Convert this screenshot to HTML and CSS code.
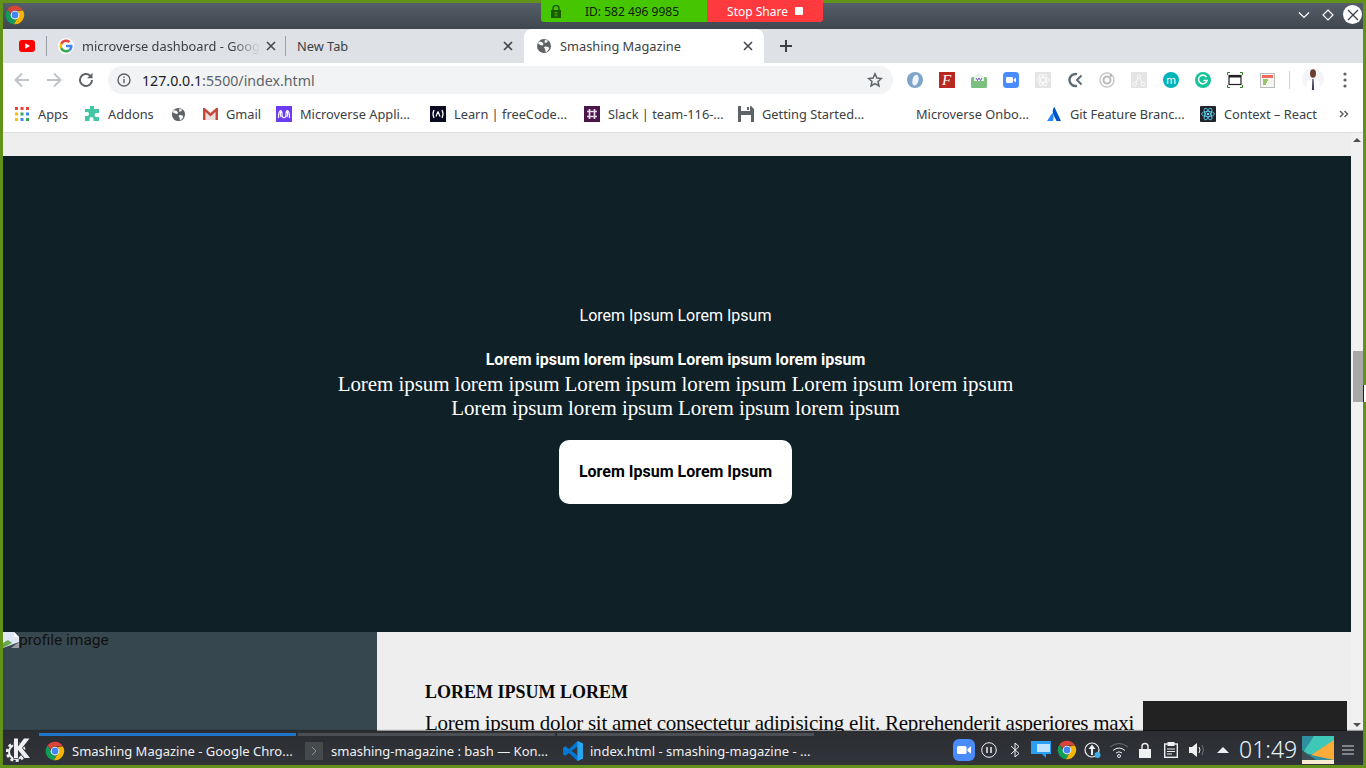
FILE: index.html
```html
<!DOCTYPE html>
<html lang="en">
<head>
<meta charset="utf-8">
<title>Smashing Magazine</title>
<link rel="stylesheet" href="styles.css">
</head>
<body>
<svg class="defs" width="0" height="0" aria-hidden="true">
  <symbol id="chrome" viewBox="0 0 48 48">
    <path fill="#db4437" d="M24 2a22 22 0 0 1 19 11H24a11 11 0 0 0-10.500 7.500L6.200 10.600A22 22 0 0 1 24 2z"/>
    <path fill="#0f9d58" d="M6.200 10.600l10 17.400A9.500 9.500 0 0 0 29 33.500L21.500 45.900A22 22 0 0 1 6.200 10.600z"/>
    <path fill="#f4b400" d="M43 13a22 22 0 0 1-21.500 32.900L31.500 28.500A9.500 9.500 0 0 0 30 15z"/>
    <circle cx="24" cy="24" r="10.500" fill="#fff"/>
    <circle cx="24" cy="24" r="8.200" fill="#4285f4"/>
  </symbol>
  <symbol id="globe" viewBox="0 0 16 16">
    <circle cx="8" cy="8" r="7" fill="#5f6368"/>
    <path fill="#fff" d="M3 3.500l3 .5 1.500 2-1 1.500-2-.5L2 5.500zM9 1.800l3 1-1.500 2H8.500zM9 8.500l3.500.5.500 2-2.500 3-1-.5-.5-2.500-1-1.500z"/>
  </symbol>
</svg>

<div class="screen">
  <header class="titlebar">
    <svg class="title-logo" width="20" height="20"><use href="#chrome"/></svg>
    <div class="window-buttons">
      <svg width="14" height="14" viewBox="0 0 14 14"><path d="M2 4.500l5 5 5-5" fill="none" stroke="#fff" stroke-width="1.200"/></svg>
      <svg width="14" height="14" viewBox="0 0 14 14"><path d="M7 2l5 5-5 5-5-5z" fill="none" stroke="#fff" stroke-width="1.200"/></svg>
      <span class="close-btn"><svg width="18" height="18" viewBox="0 0 18 18"><path d="M4 4l10 10M14 4L4 14" stroke="#3b4149" stroke-width="1.300"/></svg></span>
    </div>
  </header>

  <div class="share-bar">
    <div class="share-id">
      <svg class="share-lock" width="10" height="13" viewBox="0 0 10 13"><path d="M2 6V3.500a3 3 0 0 1 6 0V6" fill="none" stroke="#1a5a00" stroke-width="1.500"/><rect x="0" y="5" width="10" height="8" fill="#1a5a00"/><path d="M3.500 7h3v.8h-3zM3.500 8.700h3v.8h-3zM3.500 10.400h3v.8h-3z" fill="#46c600"/></svg>
      <span>ID: 582 496 9985</span>
    </div>
    <div class="share-stop"><span>Stop Share</span><i class="stop-square"></i></div>
  </div>

  <nav class="tabstrip">
    <div class="tab tab-pin">
      <svg width="16" height="12" viewBox="0 0 16 12"><rect width="16" height="12" rx="3" fill="#f00"/><path d="M6.300 3.200L11 6l-4.700 2.800z" fill="#fff"/></svg>
    </div>
    <div class="tab tab-google">
      <span class="g-badge"><svg width="14" height="14" viewBox="0 0 48 48"><path fill="#ea4335" d="M24 10c3.500 0 6.500 1.300 8.900 3.400l6.300-6.300C35.300 3.600 30 1.500 24 1.500 15.200 1.500 7.700 6.500 4 13.800l7.300 5.700C13.100 14 18.100 10 24 10z"/><path fill="#4285f4" d="M46.500 24.500c0-1.600-.1-3.100-.4-4.500H24v8.500h12.700c-.6 2.900-2.200 5.300-4.700 7l7.200 5.600c4.200-3.900 7.300-9.700 7.300-16.600z"/><path fill="#fbbc05" d="M11.300 28.500a14 14 0 0 1 0-9L4 13.800a22.500 22.500 0 0 0 0 20.400z"/><path fill="#34a853" d="M24 46.500c6 0 11.100-2 14.800-5.400L31.600 35.500c-2 1.400-4.600 2.500-7.600 2.500-5.900 0-10.900-4-12.700-9.500L4 34.200c3.700 7.300 11.200 12.300 20 12.300z"/></svg></span>
      <span class="tab-title tab-fade">microverse dashboard - Google</span>
      <svg class="tab-x" width="10" height="10" viewBox="0 0 10 10"><path d="M1 1l8 8M9 1L1 9" stroke="#45494d" stroke-width="1.600"/></svg>
    </div>
    <div class="tab tab-new">
      <span class="tab-title">New Tab</span>
      <svg class="tab-x" width="10" height="10" viewBox="0 0 10 10"><path d="M1 1l8 8M9 1L1 9" stroke="#45494d" stroke-width="1.600"/></svg>
    </div>
    <div class="tab tab-active">
      <svg width="16" height="16"><use href="#globe"/></svg>
      <span class="tab-title">Smashing Magazine</span>
      <svg class="tab-x" width="10" height="10" viewBox="0 0 10 10"><path d="M1 1l8 8M9 1L1 9" stroke="#45494d" stroke-width="1.600"/></svg>
    </div>
    <svg class="new-tab" width="14" height="14" viewBox="0 0 14 14"><path d="M7 1v12M1 7h12" stroke="#3c4043" stroke-width="2"/></svg>
  </nav>

  <div class="toolbar">
    <svg class="nav-icon" width="18" height="18" viewBox="0 0 18 18"><path d="M16 9H3M9 2.500L2.500 9 9 15.500" fill="none" stroke="#c0c3c7" stroke-width="2"/></svg>
    <svg class="nav-icon" width="18" height="18" viewBox="0 0 18 18"><path d="M2 9h13M9 2.500L15.500 9 9 15.500" fill="none" stroke="#c0c3c7" stroke-width="2"/></svg>
    <svg class="nav-icon" width="18" height="18" viewBox="0 0 18 18"><path d="M15 9a6 6 0 1 1-1.800-4.300" fill="none" stroke="#5f6368" stroke-width="2"/><path d="M15.500 1.800v5.500H10z" fill="#5f6368"/></svg>
    <div class="omnibox">
      <svg width="14" height="14" viewBox="0 0 14 14"><circle cx="7" cy="7" r="6" fill="none" stroke="#5f6368" stroke-width="1.400"/><path d="M7 6v4.300M7 3.500v1.400" stroke="#5f6368" stroke-width="1.400"/></svg>
      <span class="url"><b>127.0.0.1</b>:5500/index.html</span>
      <svg class="star" width="16" height="16" viewBox="0 0 16 16"><path d="M8 1.800l1.900 4.200 4.500.5-3.400 3 1 4.500L8 11.700l-4 2.300 1-4.500-3.400-3 4.500-.5z" fill="none" stroke="#5f6368" stroke-width="1.500"/></svg>
    </div>
    <div class="extensions">
      <span class="ext"><svg width="16" height="16" viewBox="0 0 16 16"><circle cx="8" cy="8" r="8" fill="#7fa3c9"/><ellipse cx="8.500" cy="8" rx="3" ry="5.500" fill="#eef4fa" transform="rotate(15 8 8)"/></svg></span>
      <span class="ext"><svg width="16" height="16" viewBox="0 0 16 16"><rect width="16" height="16" fill="#b8281f"/><text class="ext-f" x="3" y="13">F</text></svg></span>
      <span class="ext"><svg width="16" height="16" viewBox="0 0 16 16"><rect y="5" width="16" height="11" rx="1.500" fill="#7cc07f"/><path d="M3 5l5-4 5 4v4H3z" fill="#e8f0ea"/><path d="M5 6l1.500 2.500L8 6l1.500 2.500L11 6" fill="none" stroke="#7b5cc9" stroke-width="1"/></svg></span>
      <span class="ext"><svg width="16" height="16" viewBox="0 0 16 16"><rect width="16" height="16" rx="3.500" fill="#4a8cff"/><rect x="3" y="5" width="7" height="6" rx="1.200" fill="#fff"/><path d="M10.800 7.300L13 5.500v5l-2.200-1.800z" fill="#fff"/></svg></span>
      <span class="ext"><svg width="16" height="16" viewBox="0 0 16 16"><rect width="16" height="16" fill="#e4e4e4"/><g fill="none" stroke="#fafafa"><ellipse cx="8" cy="8" rx="6" ry="2.400"/><ellipse cx="8" cy="8" rx="6" ry="2.400" transform="rotate(60 8 8)"/><ellipse cx="8" cy="8" rx="6" ry="2.400" transform="rotate(120 8 8)"/></g></svg></span>
      <span class="ext"><svg width="16" height="16" viewBox="0 0 16 16"><path d="M10 2.200A6 6 0 1 0 10 13.800" fill="none" stroke="#5c6c75" stroke-width="2.400"/><path d="M14.500 3.500L10 8l4.500 4.500" fill="none" stroke="#5c6c75" stroke-width="2"/></svg></span>
      <span class="ext"><svg width="16" height="16" viewBox="0 0 16 16"><circle cx="8" cy="8" r="7" fill="none" stroke="#c8c8c8" stroke-width="1.500"/><circle cx="8" cy="8" r="3.500" fill="none" stroke="#bbb" stroke-width="2"/><circle cx="12" cy="3.500" r="1.200" fill="#aaa"/></svg></span>
      <span class="ext"><svg width="16" height="16" viewBox="0 0 16 16"><rect width="16" height="16" fill="#e4e4e4"/><g fill="none" stroke="#fafafa"><circle cx="8" cy="4.500" r="1.800"/><circle cx="4" cy="12" r="1.800"/><circle cx="12" cy="12" r="1.800"/><path d="M7 6l-2.200 4.500M9 6l2.200 4.500"/></g></svg></span>
      <span class="ext"><svg width="16" height="16" viewBox="0 0 16 16"><circle cx="8" cy="8" r="8" fill="#00b4b8"/><text class="ext-m" x="8" y="11.500">m</text></svg></span>
      <span class="ext"><svg width="16" height="16" viewBox="0 0 16 16"><circle cx="8" cy="8" r="8" fill="#15c39a"/><path d="M11.500 5.200A4.300 4.300 0 1 0 12 8.500H8.500" fill="none" stroke="#fff" stroke-width="1.600"/></svg></span>
      <span class="ext"><svg width="16" height="16" viewBox="0 0 16 16"><path d="M.500 3V.500H3M13 .500h2.500V3M.500 13v2.500H3M13 15.500h2.500V13" fill="none" stroke="#2e7d32"/><rect x="2" y="3.500" width="12" height="9" fill="#fff" stroke="#222" stroke-width="1.200"/><rect x="2" y="3.500" width="12" height="2" fill="#222"/></svg></span>
      <span class="ext"><svg width="15" height="15" viewBox="0 0 15 15"><rect x=".5" y=".5" width="14" height="14" fill="#f6f6f0" stroke="#bbb"/><rect x="2" y="2" width="11" height="3" fill="#f06a5e"/><path d="M3 7h5M3 9h4M3 11h3" stroke="#7cb342" stroke-width="1.300"/></svg></span>
    </div>
    <span class="toolbar-sep"></span>
    <svg class="avatar" width="22" height="26" viewBox="0 0 22 26"><circle cx="11" cy="12" r="11" fill="#f3f5f8"/><ellipse cx="11" cy="6.500" rx="3" ry="4.200" fill="#6b4030"/><path d="M5 14c2-2 10-2 12 0l1 12H4z" fill="#fff"/><path d="M10.400 12h1.200l.5 11h-2.200z" fill="#39405a"/></svg>
    <svg class="menu-dots" width="4" height="16" viewBox="0 0 4 16"><circle cx="2" cy="2" r="1.600" fill="#5f6368"/><circle cx="2" cy="8" r="1.600" fill="#5f6368"/><circle cx="2" cy="14" r="1.600" fill="#5f6368"/></svg>
  </div>

  <div class="bookmarks">
    <a class="bm bm-apps"><svg width="14" height="14" viewBox="0 0 14 14"><path fill="#ea4335" d="M0 0h3v3H0zM5.500 0h3v3h-3zM11 0h3v3h-3z"/><path fill="#fbbc05" d="M0 5.500h3v3H0zM0 11h3v3H0z"/><path fill="#34a853" d="M5.500 5.500h3v3h-3zM11 11h3v3h-3z"/><path fill="#4285f4" d="M11 5.500h3v3h-3zM5.500 11h3v3h-3z"/></svg><span>Apps</span></a>
    <a class="bm"><svg width="16" height="16" viewBox="0 0 16 16"><path fill="#43c6a5" d="M6 0h4v3h5v4h-2.500a2 2 0 0 0 0 4H15v4H9.500v-2a2 2 0 0 0-4 0v2H1v-5h2a2 2 0 0 0 0-4H1V3h5z"/></svg><span>Addons</span></a>
    <a class="bm"><svg width="15" height="15"><use href="#globe"/></svg></a>
    <a class="bm"><svg width="15" height="12" viewBox="0 0 15 12"><path fill="#e8e0dc" d="M2.500 4l5 4.500 5-4.500v8h-10z"/><path fill="#c5483c" d="M0 0l1.800 0L7.500 5 13.200 0H15v12h-2.500V4L7.500 8.500 2.500 4v8H0z"/></svg><span>Gmail</span></a>
    <a class="bm"><svg width="16" height="16" viewBox="0 0 16 16"><rect width="16" height="16" fill="#6c3cf0"/><path d="M2.500 12C2.500 3 6 3 6 8c0 5 4 5 4 0s3.500-5 3.500 4M6 8c0-5-3-1-1 3M10 8c0-5 3-1 1 3" fill="none" stroke="#fff" stroke-width="1.200"/></svg><span>Microverse Appli...</span></a>
    <a class="bm"><svg width="16" height="16" viewBox="0 0 16 16"><rect width="16" height="16" fill="#0a0a23"/><path d="M4 4Q2 8 4 12M12 4q2 4 0 8M8 5.500L6 10.500M8 5.500l2 5" fill="none" stroke="#fff" stroke-width="1.200"/></svg><span>Learn | freeCode...</span></a>
    <a class="bm"><svg width="16" height="16" viewBox="0 0 16 16"><rect width="16" height="16" fill="#4a154b"/><path d="M5.500 3v10M10.500 3v10M3 5.500h10M3 10.500h10" stroke="#e5d8e6" stroke-width="1.700"/></svg><span>Slack | team-116-...</span></a>
    <a class="bm"><svg width="16" height="16" viewBox="0 0 16 16"><path d="M0 0h13l3 3v13H0z" fill="#5f6368"/><rect x="3" y="0" width="9" height="5" fill="#fff"/><rect x="9" y="1" width="2" height="3" fill="#5f6368"/><rect x="3" y="9" width="10" height="7" fill="#fff"/></svg><span>Getting Started...</span></a>
    <a class="bm"><span>Microverse Onbo...</span></a>
    <a class="bm bm-git"><svg width="14" height="14" viewBox="0 0 14 14"><path d="M5.500 6C3.800 8 1.500 12 0 14h6c.8-2.500 1-5.500-.500-8z" fill="#2684ff"/><path d="M7 0C5 3.500 5.500 6 7 9l2.500 5H14L7.500.2z" fill="#0052cc"/></svg><span>Git Feature Branc...</span></a>
    <a class="bm"><svg width="16" height="16" viewBox="0 0 16 16"><rect width="16" height="16" rx="1" fill="#20232a"/><g fill="none" stroke="#61dafb" stroke-width=".8"><ellipse cx="8" cy="8" rx="6.500" ry="2.600"/><ellipse cx="8" cy="8" rx="6.500" ry="2.600" transform="rotate(60 8 8)"/><ellipse cx="8" cy="8" rx="6.500" ry="2.600" transform="rotate(120 8 8)"/></g><circle cx="8" cy="8" r="1.300" fill="#61dafb"/></svg><span>Context – React</span></a>
    <svg class="bm-more" width="10" height="8" viewBox="0 0 10 8"><path d="M1 1l3 3-3 3M5.500 1l3 3-3 3" fill="none" stroke="#5f6368" stroke-width="1.500"/></svg>
  </div>

  <div class="viewport">
    <main class="page">
      <section class="hero">
        <p class="hero-eyebrow">Lorem Ipsum Lorem Ipsum</p>
        <p class="hero-strong">Lorem ipsum lorem ipsum Lorem ipsum lorem ipsum</p>
        <p class="hero-serif">Lorem ipsum lorem ipsum Lorem ipsum lorem ipsum Lorem ipsum lorem ipsum<br>Lorem ipsum lorem ipsum Lorem ipsum lorem ipsum</p>
        <a class="hero-btn">Lorem Ipsum Lorem Ipsum</a>
      </section>
      <section class="about">
        <div class="about-photo">
          <svg class="broken" width="16" height="16" viewBox="0 0 16 16"><path d="M0 0h11l5 5v5L0 16z" fill="#dfe6f5"/><path d="M0 11l5-3 4 3-9 5z" fill="#6aa84f"/><path d="M11 0l5 5h-5z" fill="#fff"/><path d="M8 16l8-6v6z" fill="#9aa0a6"/></svg><span>profile image</span>
        </div>
        <div class="about-copy">
          <h2>LOREM IPSUM LOREM</h2>
          <p>Lorem ipsum dolor sit amet consectetur adipisicing elit. Reprehenderit asperiores maxi</p>
        </div>
      </section>
    </main>
    <div class="scrollbar">
      <i class="arrow-up"></i>
      <i class="thumb"></i>
      <i class="arrow-down"></i>
    </div>
    <div class="dark-overlay"></div>
  </div>

  <footer class="taskbar">
    <svg class="kde" width="26" height="26" viewBox="0 0 26 26"><g fill="none" stroke="#eff0f1"><circle cx="11" cy="15" r="8.800" stroke-width="2.600" stroke-dasharray="3 2.500"/><circle cx="11" cy="15" r="7" stroke-width="2"/></g><path d="M9 1.500h4v8l6-8h5.500l-7.500 9.500 8 10h-5.500L13 13v8H9z" fill="#eff0f1" stroke="#2e3136" stroke-width="1.500" paint-order="stroke"/></svg>
    <div class="tasks">
      <div class="task task-on"><svg width="20" height="20"><use href="#chrome"/></svg><span>Smashing Magazine - Google Chro...</span></div>
      <div class="task"><svg class="term" width="18" height="18" viewBox="0 0 18 18"><rect width="18" height="18" fill="#454a4d"/><path d="M7 5l4 4-4 4" fill="none" stroke="#8d9396" stroke-width="1"/></svg><span>smashing-magazine : bash — Kon...</span></div>
      <div class="task"><svg width="20" height="20" viewBox="0 0 20 20"><path d="M14.500 0L20 2.500v15L14.500 20 6 12l-3.500 2.700L0 13.500v-7L2.500 5.300 6 8z" fill="#0078d4"/><path d="M14.500 5.500L8.500 10l6 4.500z" fill="#31363b"/><path d="M14.500 0L20 2.500v15L14.500 20z" fill="#2aa4ec"/></svg><span>index.html - smashing-magazine - ...</span></div>
    </div>
    <div class="tray">
      <span class="tray-icon tray-zoom"><svg width="22" height="22" viewBox="0 0 22 22"><rect width="22" height="22" rx="6" fill="#4a8cff"/><rect x="4" y="7" width="9.500" height="8" rx="1.500" fill="#fff"/><path d="M14.500 10l3.500-2.700v7.400L14.500 12z" fill="#fff"/></svg></span>
      <span class="tray-icon"><svg width="16" height="16" viewBox="0 0 16 16"><circle cx="8" cy="8" r="7.300" fill="none" stroke="#eff0f1"/><path d="M6 5v6M10 5v6" stroke="#eff0f1" stroke-width="1.500"/></svg></span>
      <span class="tray-icon"><svg width="12" height="16" viewBox="0 0 12 16"><path d="M2 4l8 7.500L6 15V1l4 3.500L2 12" fill="none" stroke="#eff0f1"/></svg></span>
      <span class="tray-icon"><svg width="20" height="20" viewBox="0 0 20 20"><path d="M0 1h20v13h-5v4l-4-4H0z" fill="#2a9df4"/><path d="M6 4h13v8H6z" fill="#bfe3fb"/></svg></span>
      <span class="tray-icon"><svg width="20" height="20"><use href="#chrome"/></svg></span>
      <span class="tray-icon"><svg width="18" height="18" viewBox="0 0 18 18"><circle cx="8" cy="9" r="7" fill="none" stroke="#eff0f1" stroke-width="1.200"/><path d="M8 3.500L4.500 8H7v6h2V8h2.500z" fill="#eff0f1"/><circle cx="13.500" cy="14" r="3" fill="#3daee9"/></svg></span>
      <span class="tray-icon"><svg width="20" height="16" viewBox="0 0 20 16"><path d="M1 5q9-7 18 0" fill="none" stroke="#6e7175"/><path d="M4 8.500q6-5 12 0M7 11q3-2.500 6 0" fill="none" stroke="#eff0f1"/><circle cx="10" cy="14" r="1.500" fill="none" stroke="#eff0f1"/></svg></span>
      <span class="tray-icon"><svg width="12" height="16" viewBox="0 0 12 16"><path d="M3 7V4.500a3 3 0 0 1 6 0V7" fill="none" stroke="#eff0f1" stroke-width="1.400"/><rect y="7" width="12" height="9" fill="#eff0f1"/></svg></span>
      <span class="tray-icon"><svg width="14" height="16" viewBox="0 0 14 16"><rect x=".7" y="2" width="12.600" height="13.300" fill="none" stroke="#eff0f1" stroke-width="1.400"/><rect x="3.500" y="0" width="7" height="4" fill="#eff0f1"/><path d="M3 7h8M3 9.500h8M3 12h5" stroke="#eff0f1"/></svg></span>
      <span class="tray-icon"><svg width="17" height="16" viewBox="0 0 17 16"><path d="M0 5h3l5-4v14l-5-4H0z" fill="#eff0f1"/><path d="M10 5q2 3 0 6" fill="none" stroke="#eff0f1"/><path d="M13 3q3 5 0 10" fill="none" stroke="#6e7175"/></svg></span>
      <span class="tray-icon"><svg width="12" height="6" viewBox="0 0 12 6"><path d="M6 0l6 6H0z" fill="#eff0f1"/></svg></span>
    </div>
    <time class="clock">01:49</time>
    <svg class="wall" width="32" height="28" viewBox="0 0 32 28"><rect width="32" height="28" fill="#2f8fa0"/><path d="M32 0H12L0 18h32z" fill="#3fc7b7"/><path d="M32 4L9 19l23 5z" fill="#fbab3a"/><path d="M0 14l14 10H0z" fill="#3f4f56"/><rect y="24" width="32" height="4" fill="#faebd0"/></svg>
    <svg class="hamburger" width="12" height="10" viewBox="0 0 12 10"><path d="M0 1h12M0 5h12M0 9h12" stroke="#9a9ea2" stroke-width="1.600"/></svg>
  </footer>
  <div class="cursor"></div>
</div>
</body>
</html>
```

FILE: styles.css
```css
* { box-sizing: border-box; }
html, body { margin: 0; height: 100%; overflow: hidden; }
body { font-family: "Noto Sans", sans-serif; background: #5f8f1a; }
.defs { position: absolute; }

.screen {
  position: relative;
  width: 1366px;
  height: 768px;
  border: 3px solid #63921a;
  display: flex;
  flex-direction: column;
  background: #fff;
}

/* window title bar */
.titlebar {
  height: 26px;
  flex: none;
  display: flex;
  align-items: center;
  justify-content: space-between;
  background: linear-gradient(#555e69, #3f464e);
  padding: 0 0 3px 2px;
}
.title-logo { display: block; }
.window-buttons { display: flex; align-items: center; gap: 10px; }
.close-btn {
  width: 19px; height: 19px;
  border-radius: 50%;
  background: #fdfdfd;
  display: flex; align-items: center; justify-content: center;
  margin: 0 1px 0 -2px;
}

/* meeting share pill */
.share-bar {
  position: absolute;
  left: 538px; top: -3px;
  width: 282px; height: 22px;
  display: flex;
  border-radius: 0 0 3px 3px;
  overflow: hidden;
  font-size: 12px;
}
.share-id {
  width: 166px;
  background: #46c600;
  color: #0a2000;
  display: flex; align-items: center;
  padding-left: 10px;
  gap: 24px;
}
.share-stop {
  flex: 1;
  background: #ff3a3f;
  color: #fff;
  display: flex; align-items: center;
  justify-content: center;
  gap: 7px;
}
.stop-square { width: 8px; height: 8px; background: #fff; border-radius: 1px; }

/* tabs */
.tabstrip {
  height: 34px;
  flex: none;
  display: flex;
  background: #dee1e6;
  font-size: 12.8px;
  color: #3c4043;
}
.tab { display: flex; align-items: center; height: 34px; border-right: 1px solid transparent; }
.tab-pin { width: 45px; padding-left: 16px; position: relative; }
.tab-pin::after, .tab-google::after {
  content: ""; position: absolute; right: 0; top: 7px; width: 1px; height: 20px; background: #9aa0a6;
}
.tab-google { width: 239px; padding-left: 10px; position: relative; }
.tab-new { width: 237px; padding-left: 10px; }
.tab-active {
  width: 240px;
  background: #fff;
  border-radius: 8px 8px 0 0;
  padding-left: 12px;
}
.g-badge {
  width: 16px; height: 16px; border-radius: 50%; background: #fff;
  display: flex; align-items: center; justify-content: center;
}
.tab-title { flex: 1; padding-left: 8px; white-space: nowrap; overflow: hidden; }
.tab-new .tab-title { padding-left: 0; }
.tab-fade {
  -webkit-mask-image: linear-gradient(90deg, #000 85%, transparent);
  mask-image: linear-gradient(90deg, #000 85%, transparent);
}
.tab-x { flex: none; margin: 0 10px 0 6px; }
.new-tab { margin: 10px 0 0 15px; }

/* toolbar */
.toolbar {
  height: 34px;
  flex: none;
  display: flex;
  align-items: center;
  background: #fff;
  padding-left: 10px;
}
.nav-icon { margin-right: 14px; }
.omnibox {
  width: 785px; height: 28px;
  margin-left: -1px;
  border-radius: 14px;
  background: #f1f3f4;
  display: flex; align-items: center;
  padding: 0 10px 0 9px;
  font-size: 14.2px;
  color: #5f6368;
}
.url { flex: 1; margin-left: 11px; }
.url b { font-weight: 400; color: #202124; }
.extensions { display: flex; margin-left: 6px; }
.ext { width: 32px; height: 24px; display: flex; align-items: center; justify-content: center; }
.ext-f { font: italic 15px "Liberation Serif", serif; fill: #fff; }
.ext-m { font: 11px Roboto, sans-serif; fill: #fff; text-anchor: middle; }
.toolbar-sep { width: 1px; height: 18px; background: #cfd1d4; margin-left: 6px; }
.avatar { margin-left: 12px; }
.menu-dots { margin-left: 19px; }

/* bookmarks */
.bookmarks {
  height: 36px;
  flex: none;
  display: grid;
  grid-template-columns: 69px 87px 32px 73px 154px 154px 154px 178px 131px 153px 139px 10px;
  align-items: center;
  padding: 0 0 1px 12px;
  background: #fff;
  border-bottom: 1px solid #dcdee1;
  font-size: 12.8px;
  color: #3c4043;
}
.bm { display: flex; align-items: center; gap: 8px; white-space: nowrap; }
.bm-apps, .bm-git { gap: 9px; }
.bm-more { display: block; }

/* page */
.viewport {
  position: relative;
  flex: 1;
  min-height: 0;
  display: flex;
  background: #eee;
}
.page {
  flex: 1;
  min-width: 0;
  padding-top: 23px;
  overflow: hidden;
}
.hero {
  height: 476px;
  background: #102027;
  color: #fff;
  display: flex;
  flex-direction: column;
  align-items: center;
  text-align: center;
  font-family: Roboto, sans-serif;
  padding: 149px 3px 0 0;
}
.hero p { margin: 0; }
.hero-eyebrow { font-size: 16px; line-height: 22px; }
.hero .hero-strong { font-size: 16px; line-height: 22px; font-weight: 700; margin-top: 22px; }
.hero .hero-serif {
  font-family: "Liberation Serif", serif;
  font-size: 21px;
  line-height: 24px;
  letter-spacing: -.07px;
  margin-top: 1px;
}
.hero-btn {
  margin-top: 20px;
  width: 233px; height: 64px;
  padding-bottom: 2px;
  display: flex; align-items: center; justify-content: center;
  background: #fff;
  color: #000;
  border-radius: 10px;
  font-size: 16px;
  font-weight: 700;
}
.about { display: flex; height: 200px; }
.about-photo {
  width: 374px;
  background: #37474f;
  color: #111;
  font-family: Roboto, sans-serif;
  font-size: 15.5px;
  line-height: 16px;
  flex: none;
  display: flex;
  align-items: flex-start;
}
.broken { flex: none; }
.about-copy { padding: 48px 0 0 48px; min-width: 0; color: #0a0a0a; font-family: "Liberation Serif", serif; }
.about-copy h2 { margin: 0; font-size: 18px; line-height: 24px; font-weight: 700; white-space: nowrap; }
.about-copy p { margin: 7px 0 0; font-size: 21px; line-height: 24px; letter-spacing: -.25px; white-space: nowrap; }

/* scrollbar */
.scrollbar {
  position: relative;
  flex: none;
  width: 12px;
  background: #f1f1f1;
}
.arrow-up, .arrow-down, .thumb { position: absolute; display: block; }
.arrow-up { left: 2px; top: 5px; border: 4px solid transparent; border-top: 0; border-bottom: 4px solid #505050; }
.arrow-down { left: 2px; bottom: 4px; border: 4px solid transparent; border-bottom: 0; border-top: 4px solid #505050; }
.thumb { left: 2px; right: 0; top: 218px; height: 51px; background: #a8a8a8; }
.dark-overlay {
  position: absolute;
  left: 1140px; bottom: 0;
  width: 204px; height: 30px;
  background: #222;
}

/* task bar */
.taskbar {
  height: 34px;
  flex: none;
  display: flex;
  align-items: center;
  background: linear-gradient(#2b2d31, #31343a);
  box-shadow: 0 -1px 1px rgba(0, 0, 0, .35);
  color: #eff0f1;
  font-size: 13px;
  position: relative;
}
.kde { margin: 3px 0 0 2px; flex: none; }
.tasks { display: flex; margin-left: 8px; gap: 2px; height: 34px; }
.task {
  width: 257px;
  display: flex; align-items: center;
  gap: 7px;
  padding: 0 0 0 6px;
  border-top: 3px solid #4b4e52;
  margin-top: 2px;
  height: 32px;
  white-space: nowrap;
  overflow: hidden;
}
.task-on { border-top-color: #1d76c9; }
.term { margin: 0 1px; }
.tray { display: flex; align-items: center; margin-left: 136px; margin-top: 3px; }
.tray-icon { width: 26px; height: 26px; display: flex; align-items: center; justify-content: center; }
.tray-zoom { margin-left: 1px; margin-right: -1px; }
.clock { font-size: 23px; font-weight: 300; margin: 3px 0 0 3px; line-height: 1; color: #e8f3fb; }
.wall { margin: 4px 0 0 5px; flex: none; }
.hamburger { margin: 3px 0 0 8px; flex: none; }

.cursor {
  position: absolute;
  left: 1360px; top: 382px;
  width: 3px; height: 17px;
  background: #fff;
  border-left: 1px solid #222;
}
```
